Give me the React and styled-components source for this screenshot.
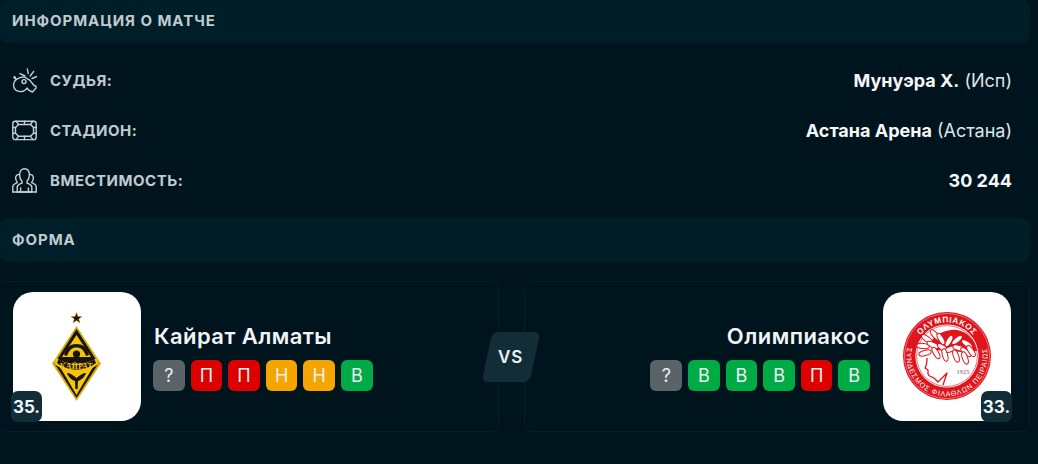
import React from "react";
import styled, { createGlobalStyle } from "styled-components";

const Global = createGlobalStyle`
  html, body { margin: 0; padding: 0; background: #00141e; }
  body { font-family: Inter, "Noto Sans", sans-serif; overflow: hidden; }
`;

const Page = styled.div`
  width: 1030px;
  height: 464px;
  box-sizing: border-box;
  color: #f2f5f7;
`;

const SectionHeader = styled.div`
  height: ${(p) => p.$h}px;
  display: flex;
  align-items: center;
  padding: 0 12px 2px;
  box-sizing: border-box;
  background: #001e28;
  border-radius: 8px;
  font-size: 15px;
  font-weight: 700;
  letter-spacing: 0.95px;
  color: #c0cbd1;
  text-transform: uppercase;
`;

const Rows = styled.div`
  padding: 13px 18px 12px 12px;
`;

const Row = styled.div`
  height: 50px;
  display: flex;
  align-items: center;
  justify-content: space-between;
  padding-bottom: 1px;
  box-sizing: border-box;
`;

const Label = styled.div`
  display: flex;
  align-items: center;
  gap: 13px;
  font-size: 15px;
  font-weight: 700;
  letter-spacing: 0.5px;
  color: #c0cbd1;
  text-transform: uppercase;
`;

const IconBox = styled.svg`
  width: 25px;
  height: 25px;
  flex: none;
  fill: none;
  stroke: #c6d1d7;
  stroke-width: 1.4;
  stroke-linecap: round;
  stroke-linejoin: round;
`;

const Value = styled.div`
  font-size: 18px;
  font-weight: 400;
  color: #dfe6ea;
  b {
    font-weight: 700;
    color: #f5f7f9;
  }
`;

const Teams = styled.div`
  position: relative;
  display: flex;
  gap: 25px;
  margin-top: 19px;
`;

const Card = styled.div`
  flex: ${(p) => p.$w}px 0 0;
  height: 151px;
  box-sizing: border-box;
  display: flex;
  flex-direction: ${(p) => (p.$right ? "row-reverse" : "row")};
  align-items: flex-start;
  gap: 13px;
  padding: ${(p) => (p.$right ? "10px 18px 0 0" : "10px 0 0 12px")};
  border: 1px solid #03202b;
  border-left-color: ${(p) => (p.$right ? "#03202b" : "transparent")};
  border-radius: 8px;
`;

const Logo = styled.div`
  position: relative;
  width: 128px;
  height: 129px;
  flex: none;
  background: #fff;
  border-radius: 20px;
  svg { display: block; }
`;

const Rank = styled.div`
  position: absolute;
  bottom: -1px;
  ${(p) => (p.$right ? "right: -1px;" : "left: -2px;")}
  width: 31px;
  height: 31px;
  display: flex;
  align-items: center;
  justify-content: center;
  background: #122d38;
  border-radius: 7px;
  font-size: 17px;
  font-weight: 700;
  color: #f5f7f9;
`;

const TeamInfo = styled.div`
  display: flex;
  flex-direction: column;
  align-items: ${(p) => (p.$right ? "flex-end" : "flex-start")};
  padding-top: 31px;
`;

const TeamName = styled.div`
  font-size: 22px;
  font-weight: 600;
  letter-spacing: 0.45px;
  line-height: 26px;
  color: #f2f5f7;
`;

const FormRow = styled.div`
  display: flex;
  gap: 6px;
  margin-top: 11px;
  margin-left: ${(p) => (p.$right ? "0" : "-1px")};
`;

const colors = { "?": "#5a6368", П: "#dc0000", Н: "#f5a500", В: "#00aa45" };

const FormBadge = styled.div`
  width: 31.6px;
  height: 31px;
  display: flex;
  align-items: center;
  justify-content: center;
  border-radius: 6px;
  font-size: 18px;
  color: #ebf0f2;
  background: ${(p) => colors[p.$r]};
`;

const Versus = styled.div`
  position: absolute;
  left: 487px;
  top: 51px;
  width: 48px;
  height: 50px;
  display: flex;
  align-items: center;
  justify-content: center;
  background: #122d38;
  border-radius: 6px;
  transform: skewX(-12deg);
  span {
    transform: skewX(12deg);
    font-size: 17px;
    font-weight: 600;
    letter-spacing: 0.8px;
    color: #eef2f4;
  }
`;

const Whistle = () => (
  <IconBox viewBox="0 0 25 25">
    <circle cx="1.6" cy="9.4" r="0.6" transform="translate(1 0)" />
    <path d="M2.6 10 L4.4 11.4 C6.5 10 9.5 8.6 12.5 9 L18 12.4 L22 17.5 L24 18.2 L24 20 L20.5 24 L17 22.3 L15 20 C13 24 7 24.6 3.6 22 C0.6 19.2 0.8 14 4.4 11.4" />
    <circle cx="12" cy="13.6" r="2" />
    <path d="M13 8 L8 5.6 M15.4 1 L16.2 5.6 M21.6 3.4 L18.2 8 M25 8.5 L20 10.5" />
  </IconBox>
);

const Stadium = () => (
  <IconBox viewBox="0 0 25 25">
    <rect x="0.8" y="3.2" width="23.4" height="18.4" rx="2.4" />
    <path d="M6.5 6.5 H18.5 L21.5 9.5 V15.3 L18.5 18.3 H6.5 L3.5 15.3 V9.5 Z" />
    <path d="M0.8 9.5 H3.5 M0.8 15.3 H3.5 M21.5 9.5 H24.2 M21.5 15.3 H24.2 M6.5 6.5 L4 3.2 M18.5 6.5 L21 3.2 M6.5 18.3 L4 21.6 M18.5 18.3 L21 21.6 M12.5 3.2 V6.5 M12.5 18.3 V21.6" />
  </IconBox>
);

const People = () => (
  <IconBox viewBox="0 0 25 25">
    <path d="M0.8 24 V18.5 C0.8 16.6 3 15.6 5.4 14.6 C4.2 13 3.6 11.6 3.6 10 C3.6 7.6 5.2 6.4 7.4 6.4" />
    <path d="M24.2 24 V18.5 C24.2 16.6 22 15.6 19.6 14.6 C20.8 13 21.4 11.6 21.4 10 C21.4 7.6 19.8 6.4 17.6 6.4" />
    <path d="M7.6 7 C7.6 3 9.6 0.8 12.5 0.8 C15.4 0.8 17.4 3 17.4 7 C17.4 10 16.2 12 15 13.2 L15 15 C17.4 16 19.8 16.6 19.8 19 V24 H5.2 V19 C5.2 16.6 7.6 16 10 15 L10 13.2 C8.8 12 7.6 10 7.6 7 Z" />
    <path d="M0.8 24 H24.2 M8.6 20 V24 M16.4 20 V24" />
  </IconBox>
);

const KairatLogo = () => (
  <svg width="128" height="129" viewBox="0 0 128 129">
    <polygon points="63.5,20.5 65,24.5 69,24.5 65.8,27 67,31 63.5,28.6 60,31 61.2,27 58,24.5 62,24.5" fill="#1d1a10" stroke="#c9a320" strokeWidth="0.6" />
    <polygon points="63.5,34 88,71.5 63.5,109 39,71.5" fill="#d9ae0c" />
    <polygon points="63.5,37 85.5,71.5 63.5,106 41.5,71.5" fill="#17150c" />
    <polygon points="63.5,43 78,65 49,65" fill="#f6c40c" />
    <path d="M51 63 C53 55 58 52 63.5 52 C69 52 74 55 76 63 L73 64 C71 58 68 55.5 63.5 55.5 C59 55.5 56 58 54 64 Z" fill="#17150c" />
    <circle cx="63.5" cy="62" r="3.6" fill="#17150c" />
    <polygon points="47,75 80,75 63.5,103" fill="#f6c40c" />
    <path d="M43 66 C50 70 56 72 63.5 72 C71 72 77 70 84 66 L85.5 72 C78 78 70 79 63.5 79 C57 79 49 78 41.5 72 Z" fill="#f6c40c" />
    <path d="M45.5 67.5 C52 71 57 73 63.5 73 C70 73 75 71 81.5 67.5 L83 71 C76 76 70 77.5 63.5 77.5 C57 77.5 51 76 44 71 Z" fill="#17150c" />
    <text x="63.5" y="76.6" textAnchor="middle" fontFamily="Liberation Serif, serif" fontSize="7.6" fontWeight="700" fill="#f6c40c" letterSpacing="0.4">КАЙРАТ</text>
    <path d="M54 81 C57 81 60 83 63.5 86 C67 83 70 81 73 81 C72 85 68 88 65 89 L64.6 97 L62.4 97 L62 89 C59 88 55 85 54 81 Z" fill="#17150c" />
  </svg>
);

const leaves = [
  [40, 54, 5], [44, 47, 35], [52, 43, 50], [42, 61, -15], [50, 53, 25], [58, 47, 60],
  [60, 56, 35], [66, 49, -60], [68, 57, -20], [74, 48, -40], [76, 56, 15], [84, 52, 35],
  [83, 60, 40], [88, 59, 55], [73, 64, 70], [82, 66, 70], [62, 63, 75], [53, 61, 60],
];

const OlympiacosLogo = () => (
  <svg width="128" height="129" viewBox="0 0 128 129">
    <defs>
      <path id="olTop" d="M30.4 64 a33.6 33.6 0 0 1 67.2 0" />
      <path id="olBottom" d="M28.9 43.75 A40.5 40.5 0 1 0 99.1 43.75" />
    </defs>
    <circle cx="64" cy="64" r="44" fill="#e0141c" />
    <circle cx="64" cy="64" r="42.6" fill="none" stroke="#f7c8c8" strokeWidth="0.5" />
    <circle cx="64" cy="64" r="31.6" fill="#fff" />
    <circle cx="64" cy="64" r="30.4" fill="none" stroke="#e0141c" strokeWidth="0.6" />
    <text fontFamily="Liberation Sans, sans-serif" fontSize="8.2" fontWeight="700" fill="#fff" letterSpacing="0.7">
      <textPath href="#olTop" startOffset="50%" textAnchor="middle">ΟΛΥΜΠΙΑΚΟΣ</textPath>
    </text>
    <text fontFamily="Liberation Sans, sans-serif" fontSize="7.2" fill="#fff" letterSpacing="0.9">
      <textPath href="#olBottom" startOffset="50%" textAnchor="middle">ΣΥΝΔΕΣΜΟΣ ΦΙΛΑΘΛΩΝ ΠΕΙΡΑΙΩΣ</textPath>
    </text>
    <path d="M47 52 C51 42 64 37 74 38 C85 40 92 48 94 59 L80 60 L52 58 Z" fill="#e0141c" />
    {leaves.map(([x, y, r], i) => (
      <ellipse key={i} cx={x} cy={y} rx="6.4" ry="2.6" transform={`rotate(${r} ${x} ${y})`} fill="#fff" stroke="#e0141c" strokeWidth="1" />
    ))}
    <path d="M44 66 C44 70 44 73 42 76 L45 78 L45 82 C46 85 49 85 51 86 L55 90 L64 81 L60 93" fill="none" stroke="#e0141c" strokeWidth="1.3" strokeLinejoin="round" />
    <text x="80" y="82" textAnchor="middle" fontFamily="Liberation Serif, serif" fontSize="6.6" fontWeight="700" fill="#b98a8a">1925</text>
  </svg>
);

const homeForm = ["?", "П", "П", "Н", "Н", "В"];
const awayForm = ["?", "В", "В", "В", "П", "В"];

function Form({ list, right }) {
  return (
    <FormRow $right={right}>
      {list.map((r, i) => (
        <FormBadge key={i} $r={r}>{r}</FormBadge>
      ))}
    </FormRow>
  );
}

export default function App() {
  return (
    <Page>
      <Global />
      <SectionHeader $h={43}>Информация о матче</SectionHeader>
      <Rows>
        <Row>
          <Label><Whistle />Судья:</Label>
          <Value><b>Мунуэра Х.</b> (Исп)</Value>
        </Row>
        <Row>
          <Label><Stadium />Стадион:</Label>
          <Value><b>Астана Арена</b> (Астана)</Value>
        </Row>
        <Row>
          <Label><People />Вместимость:</Label>
          <Value><b>30 244</b></Value>
        </Row>
      </Rows>
      <SectionHeader $h={44}>Форма</SectionHeader>
      <Teams>
        <Card $w={499}>
          <Logo>
            <KairatLogo />
            <Rank>35.</Rank>
          </Logo>
          <TeamInfo>
            <TeamName>Кайрат Алматы</TeamName>
            <Form list={homeForm} />
          </TeamInfo>
        </Card>
        <Card $w={506} $right>
          <Logo>
            <OlympiacosLogo />
            <Rank $right>33.</Rank>
          </Logo>
          <TeamInfo $right>
            <TeamName>Олимпиакос</TeamName>
            <Form list={awayForm} right />
          </TeamInfo>
        </Card>
        <Versus><span>VS</span></Versus>
      </Teams>
    </Page>
  );
}
